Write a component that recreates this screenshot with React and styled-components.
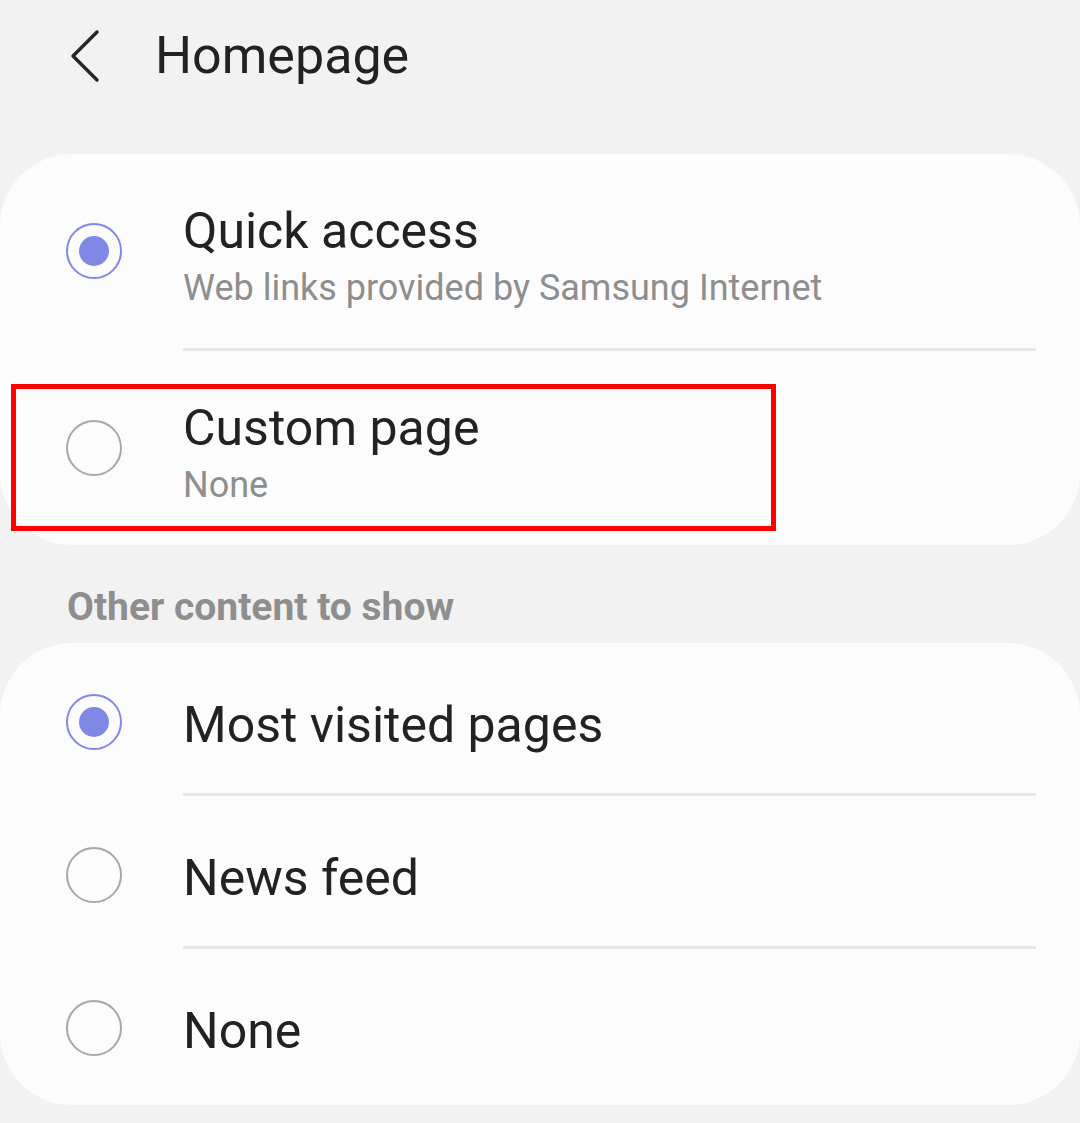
import React from "react";
import styled, { createGlobalStyle } from "styled-components";

const GlobalStyle = createGlobalStyle`
    body {
        margin: 0;
        background: #f2f2f2;
        font-family: Roboto, "Liberation Sans", sans-serif;
    }
`

const Page = styled.div`
    width: 1080px;
    min-height: 1123px;
    background: #f2f2f2;
`

const Header = styled.header`
    display: flex;
    align-items: center;
    gap: 55px;
    height: 112px;
    padding-left: 70px;
    box-sizing: border-box;

    h1 {
        margin: 0;
        font-size: 52px;
        line-height: 62px;
        font-weight: 400;
        color: #222222;
    }
`

const Card = styled.section`
    margin-top: ${props => props.top}px;
    padding-bottom: ${props => props.bottom || 0}px;
    background: #fcfcfc;
    border-radius: 72px;
`

const Row = styled.div`
    position: relative;
    display: flex;
    align-items: center;
    height: ${props => props.height}px;
    padding-top: ${props => props.padTop || 0}px;
    box-sizing: border-box;
`

const RadioSlot = styled.div`
    width: 183px;
    flex-shrink: 0;
    padding-left: 66px;
    box-sizing: border-box;
`

const Radio = styled.div`
    display: flex;
    justify-content: center;
    align-items: center;
    width: 56px;
    height: 56px;
    box-sizing: border-box;
    border-radius: 50%;
    border: 2.5px solid ${props => props.checked ? "#8288ea" : "#a8a8a8"};

    &::after {
        content: "";
        display: ${props => props.checked ? "block" : "none"};
        width: 30px;
        height: 30px;
        border-radius: 50%;
        background: #8088e6;
    }
`

const Texts = styled.div`
    display: flex;
    flex-direction: column;
    padding-top: ${props => props.shift || 0}px;
`

const Title = styled.div`
    font-size: 50px;
    line-height: 58px;
    color: #222222;
`

const Subtitle = styled.div`
    margin-top: 7px;
    font-size: 36px;
    line-height: 42px;
    color: #8e8e8e;
`

const Divider = styled.div`
    height: 3px;
    margin-left: 183px;
    margin-right: 44px;
    background: #e6e6e6;
`

const SectionLabel = styled.h2`
    margin: 40px 0 14px 67px;
    font-size: 39px;
    line-height: 44px;
    font-weight: 700;
    color: #8e8e8e;
`

const Highlight = styled.div`
    position: absolute;
    top: 33px;
    left: 11px;
    width: 765px;
    height: 147px;
    box-sizing: border-box;
    border: 5px solid #ff0000;
    pointer-events: none;
`

function BackIcon() {
    return (
        <svg width="30" height="54" viewBox="0 0 30 54">
            <polyline points="27,3 3,27 27,51" fill="none" stroke="#262626" strokeWidth="3.4" strokeLinecap="round" strokeLinejoin="round" />
        </svg>
    )
}

function Option({ title, subtitle, checked, height, padTop, children }) {
    return (
        <Row height={height} padTop={padTop}>
            <RadioSlot>
                <Radio checked={checked} />
            </RadioSlot>
            <Texts shift={subtitle ? 8 : 5}>
                <Title>{title}</Title>
                {subtitle && <Subtitle>{subtitle}</Subtitle>}
            </Texts>
            {children}
        </Row>
    )
}

const otherContent = [
    { title: "Most visited pages", checked: true },
    { title: "News feed", checked: false },
    { title: "None", checked: false },
]

export default function App() {
    return (
        <Page>
            <GlobalStyle />
            <Header>
                <BackIcon />
                <h1>Homepage</h1>
            </Header>

            <Card top={42}>
                <Option title="Quick access" subtitle="Web links provided by Samsung Internet" checked height={194} />
                <Divider />
                <Option title="Custom page" subtitle="None" height={194}>
                    <Highlight />
                </Option>
            </Card>

            <SectionLabel>Other content to show</SectionLabel>

            <Card top={0} bottom={6}>
                {otherContent.map((item, i) =>
                    <React.Fragment key={item.title}>
                        {i > 0 && <Divider />}
                        <Option title={item.title} checked={item.checked} height={150} padTop={8} />
                    </React.Fragment>
                )}
            </Card>
        </Page>
    )
}
